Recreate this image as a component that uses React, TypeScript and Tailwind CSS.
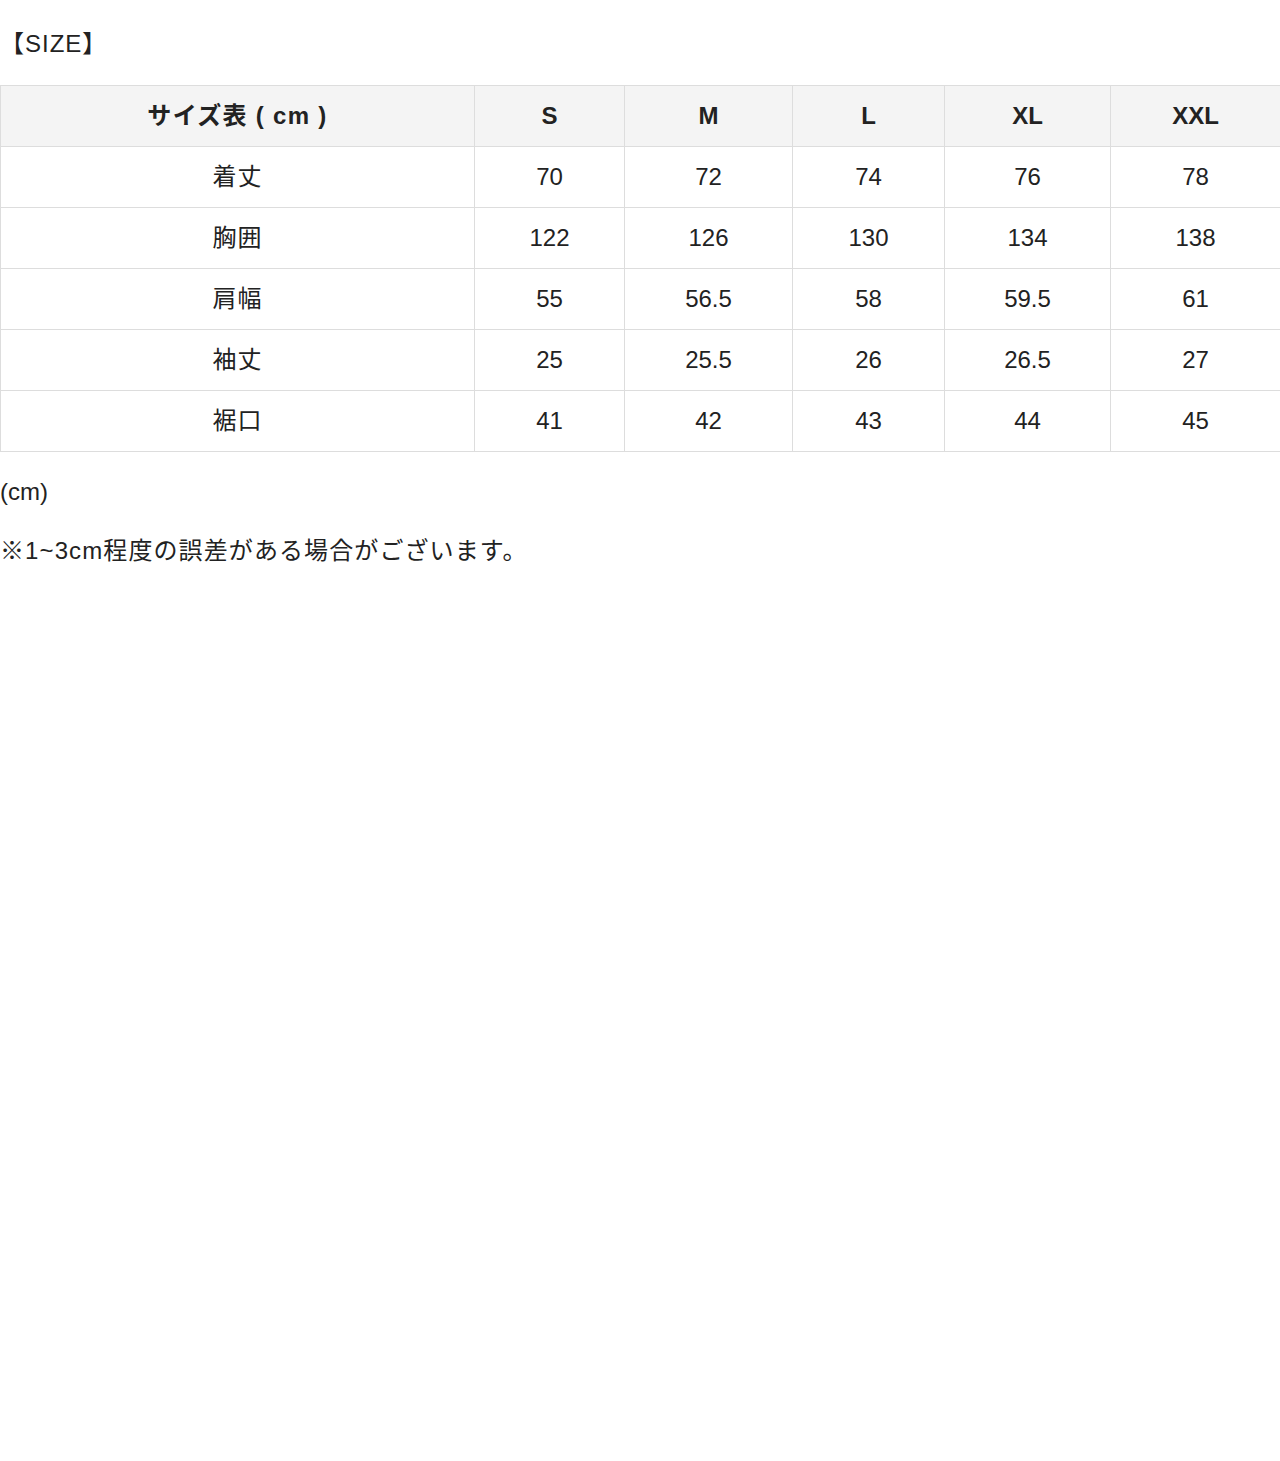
const sizes = ["S", "M", "L", "XL", "XXL"]

const rows: [string, string[]][] = [
  ["着丈", ["70", "72", "74", "76", "78"]],
  ["胸囲", ["122", "126", "130", "134", "138"]],
  ["肩幅", ["55", "56.5", "58", "59.5", "61"]],
  ["袖丈", ["25", "25.5", "26", "26.5", "27"]],
  ["裾口", ["41", "42", "43", "44", "45"]],
]

const colWidths = ["w-[474px]", "w-[150px]", "w-[168px]", "w-[152px]", "w-[166px]", "w-[170px]"]

export default function App() {
  return (
    <div
      className="min-h-[1461px] bg-white pt-[26px] text-[24px] leading-[36px] text-[#222]"
      style={{ fontFamily: '"Liberation Sans", Arial, "Noto Sans CJK JP", sans-serif' }}
    >
      <p className="tracking-[1px]">【SIZE】</p>
      <table className="mt-[23px] w-[1280px] table-fixed border-collapse text-center">
        <colgroup>
          {colWidths.map((w, i) => (
            <col key={i} className={w} />
          ))}
        </colgroup>
        <thead>
          <tr className="bg-[#f4f4f4]">
            <th className="h-[61px] border border-[#dddddd] p-0 font-bold tracking-[1.3px]">サイズ表 ( cm )</th>
            {sizes.map((s) => (
              <th key={s} className="h-[61px] border border-[#dddddd] p-0 font-bold">
                {s}
              </th>
            ))}
          </tr>
        </thead>
        <tbody>
          {rows.map(([label, values]) => (
            <tr key={label}>
              <td className="h-[61px] border border-[#dddddd] p-0 tracking-[1px]">{label}</td>
              {values.map((v, i) => (
                <td key={i} className="h-[61px] border border-[#dddddd] p-0">
                  {v}
                </td>
              ))}
            </tr>
          ))}
        </tbody>
      </table>
      <p className="mt-[22px]">(cm)</p>
      <p className="mt-[23px] tracking-[1.1px]">※1~3cm程度の誤差がある場合がございます。</p>
    </div>
  )
}
